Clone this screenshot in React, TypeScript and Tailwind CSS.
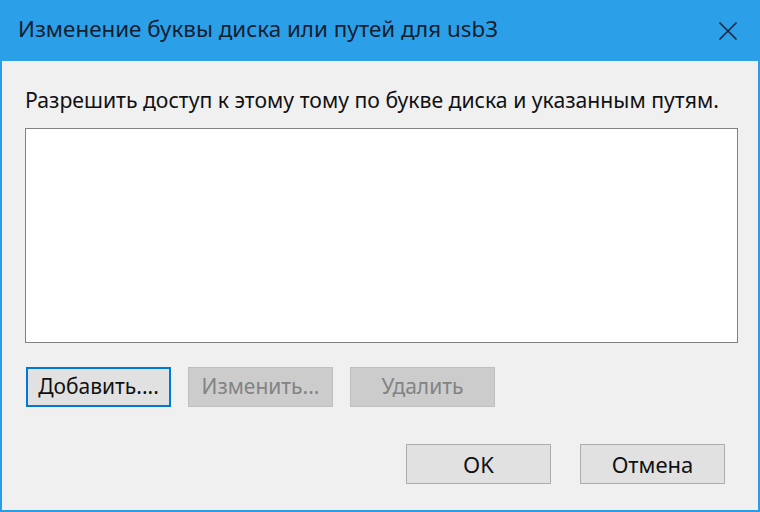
import { X } from 'lucide-react';

const font = { fontFamily: '"Noto Sans", "Open Sans", sans-serif' };

function DlgButton({ label, focused, disabled, big }: { label: string; focused?: boolean; disabled?: boolean; big?: boolean }) {
  let cls = 'border border-[#adadad] bg-[#e1e1e1] text-[#111]';
  if (focused) cls = 'border-2 border-[#0078d7] bg-[#e1e1e1] text-[#111]';
  if (disabled) cls = 'border border-[#bfbfbf] bg-[#cccccc] text-[#838383]';
  return (
    <button className={`w-[145px] h-[40px] flex items-center justify-center ${big ? 'text-[22px]' : 'text-[21px]'} ${cls}`}>
      {label}
    </button>
  );
}

export default function App() {
  return (
    <div className="w-[760px] h-[512px] flex flex-col border-x-2 border-b-2 border-[#2a9de6] bg-[#f0f0f0]" style={font}>
      {/* Title bar */}
      <div className="h-[61px] -mx-[2px] bg-[#2c9fe9] flex items-center justify-between pl-[18px] pr-[16px] shrink-0">
        <span className="text-[22.4px] text-[#14202e] leading-none pb-[2px]">Изменение буквы диска или путей для usb3</span>
        <X className="w-[32px] h-[32px] text-[#1b2a44]" strokeWidth={1.3} />
      </div>

      {/* Body */}
      <div className="flex-1 flex flex-col pl-[23px] pr-[20px] pt-[25px]">
        <p className="text-[21.2px] leading-[28px] text-[#111] mb-[14px] whitespace-nowrap">
          Разрешить доступ к этому тому по букве диска и указанным путям.
        </p>
        <div className="h-[215px] bg-white border border-[#828282]" />

        <div className="flex gap-[17px] mt-[24px] pl-[1px]">
          <DlgButton label="Добавить...." focused />
          <DlgButton label="Изменить..." disabled />
          <DlgButton label="Удалить" disabled />
        </div>

        <div className="flex justify-end gap-[29px] mt-[37px] pr-[13px]">
          <DlgButton label="OK" big />
          <DlgButton label="Отмена" big />
        </div>
      </div>
    </div>
  );
}
